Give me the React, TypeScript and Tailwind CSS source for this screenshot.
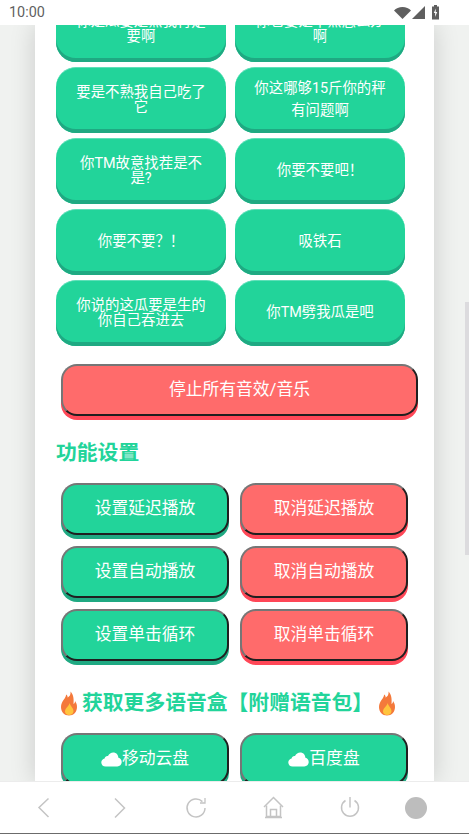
const FONT = "font-['Roboto','Noto_Sans_CJK_SC',sans-serif]";

function Tile({ text, lh = "leading-[15px]" }: { text: string; lh?: string }) {
  return (
    <div className={`flex h-[66px] w-[170px] items-center justify-center rounded-[20px] border-t border-t-[#5fdfb8] bg-[#22d49a] px-[18px] pb-[2px] text-center text-[14.4px] text-white shadow-[inset_0_-4px_0_#1fa982] ${lh}`}>
      <span>{text}</span>
    </div>
  );
}

function Btn({ children, red = false, wide = false }: { children: React.ReactNode; red?: boolean; wide?: boolean }) {
  return (
    <div className={`${wide ? "w-[357px]" : "w-[168px]"} flex h-[52px] items-center justify-center rounded-[16px] border-2 border-t-[#767676] border-l-[#767676] border-r-[#1f1f1f] border-b-[#1f1f1f] text-[16.8px] text-white ${red ? "bg-[#ff6b6b] shadow-[0_4px_0_#ff4757]" : "bg-[#22d49a] shadow-[0_4px_0_#1fa982]"}`}>
      {children}
    </div>
  );
}

function Flame() {
  return (
    <svg width="18" height="25" viewBox="0 0 18 25" className="shrink-0">
      <path d="M10.5 0.5C11 4 9 6 7.5 6.5C8 5 7 4 6 3.5C6.5 7 1 10 1 16C1 21 4.5 24.5 9 24.500C13.500 24.500 17 21 17 16C17 13 16 11.500 15 10C15 11.500 14.500 12.500 13.500 13C14 8 13.500 3.500 10.500 0.500Z" fill="#f4793b" />
      <path d="M9.500 12C9.500 15 5 17 5 20.500C5 22.800 6.800 24 9 24C11.500 24 13.500 22.500 13.500 20C13.500 17.500 10.500 15 9.500 12Z" fill="#ffc43d" />
    </svg>
  );
}

function Cloud() {
  return (
    <svg width="21" height="15" viewBox="0 0 21 15" className="shrink-0">
      <path d="M4.600 14.500C2.100 14.500 0.300 12.700 0.300 10.400C0.300 8.400 1.700 6.800 3.600 6.400C3.900 4.700 5.300 3.700 7 4C8.100 1.700 10 0.500 12.200 0.500C15.200 0.500 17.300 2.700 17.400 5.800C19.400 6.300 20.700 8 20.700 10.100C20.700 12.600 18.800 14.500 16.300 14.500Z" fill="#fff" />
    </svg>
  );
}

export default function App() {
  return (
    <div className={`flex h-[834px] w-[469px] flex-col overflow-hidden bg-white ${FONT}`}>
      <div className="flex h-[25px] shrink-0 items-center justify-between bg-white pl-[9px] pr-[28px] text-[14.4px] text-[#5f5f5f]">
        <span>10:00</span>
        <svg width="47" height="16" viewBox="0 0 47 16">
          <path d="M0 5.500C2 3.500 5 2 8.500 2C12 2 15 3.500 17 5.500L8.500 14Z" fill="#5f5f5f" />
          <path d="M18 14L31 1V14Z" fill="#5f5f5f" />
          <path d="M38 1.500H40V0H43V1.500H45V14.500H38Z" fill="#5f5f5f" />
          <path d="M41.800 3.500L39.800 8H41.200L41 12L43.200 7H41.700Z" fill="#fff" />
        </svg>
      </div>

      <div className="relative flex min-h-0 flex-1 justify-center overflow-hidden bg-[#f0f2f0]">
        <div className="h-full w-[399px] shrink-0 bg-white shadow-[0_0_24px_rgba(0,0,0,0.16)]">
          <div className="-mt-[29px] pl-[21px]">
            <div className="grid w-[349px] grid-cols-[170px_170px] gap-x-[9px] gap-y-[5px]">
              <Tile text="你是瓜要是熟我肯定要啊" />
              <Tile text="你它要是不熟怎么办啊" />
              <Tile text="要是不熟我自己吃了它" />
              <Tile text="你这哪够15斤你的秤有问题啊" lh="leading-[22px]" />
              <Tile text="你TM故意找茬是不是?" />
              <Tile text="你要不要吧！" />
              <Tile text="你要不要？！" />
              <Tile text="吸铁石" />
              <Tile text="你说的这瓜要是生的你自己吞进去" />
              <Tile text="你TM劈我瓜是吧" />
            </div>
            <div className="mt-[18px] pl-[5px]">
              <Btn red wide>停止所有音效/音乐</Btn>
            </div>
            <h2 className="mt-[22px] text-[20.8px] font-bold leading-[30px] text-[#22d49a]">功能设置</h2>
            <div className="mt-[15px] grid w-[347px] grid-cols-[168px_168px] gap-x-[11px] gap-y-[11px] pl-[5px]">
              <Btn>设置延迟播放</Btn>
              <Btn red>取消延迟播放</Btn>
              <Btn>设置自动播放</Btn>
              <Btn red>取消自动播放</Btn>
              <Btn>设置单击循环</Btn>
              <Btn red>取消单击循环</Btn>
            </div>
            <div className="mt-[29px] flex items-center pl-[4px] text-[20.8px] font-bold leading-[27px] text-[#22d49a]">
              <Flame />
              <span className="ml-[4px] whitespace-nowrap">获取更多语音盒【附赠语音包】</span>
              <span className="ml-[5px]"><Flame /></span>
            </div>
            <div className="mt-[16px] grid w-[347px] grid-cols-[168px_168px] gap-x-[11px] pl-[5px]">
              <Btn><Cloud /><span>移动云盘</span></Btn>
              <Btn><Cloud /><span>百度盘</span></Btn>
            </div>
          </div>
        </div>
        <div className="absolute right-0 top-[277px] h-[253px] w-[4px] bg-[#dcdbde]" />
      </div>

      <div className="relative flex h-[52px] shrink-0 items-center bg-white pl-[37px] shadow-[0_-1px_0_#ececec]">
        <svg width="380" height="28" viewBox="0 0 380 28" fill="none" stroke="#c4c4c4" strokeWidth="1.500">
          <path d="M11.500 4.500L2 13.500L11.500 23" />
          <path d="M78 4.500L87.500 14L78 23.500" />
          <path d="M165.400 7.600A9 9 0 1 0 168 14" />
          <path d="M168 4V9H163" strokeWidth="1.300" />
          <path d="M227 13L236.500 3.500L246 13" />
          <path d="M229.500 11.500V22.500H243.500V11.500M228 23.500H245M233.500 22V15.500H239.500V22" />
          <path d="M313 3V13.500" />
          <path d="M308.500 6.500A8.500 8.500 0 1 0 317.500 6.500" />
        </svg>
        <div className="absolute left-[405px] top-[15px] h-[22px] w-[22px] rounded-full bg-[#bdbdbd]" />
        <div className="absolute inset-x-0 bottom-0 h-px bg-[#6b6b6b]" />
      </div>
    </div>
  );
}
